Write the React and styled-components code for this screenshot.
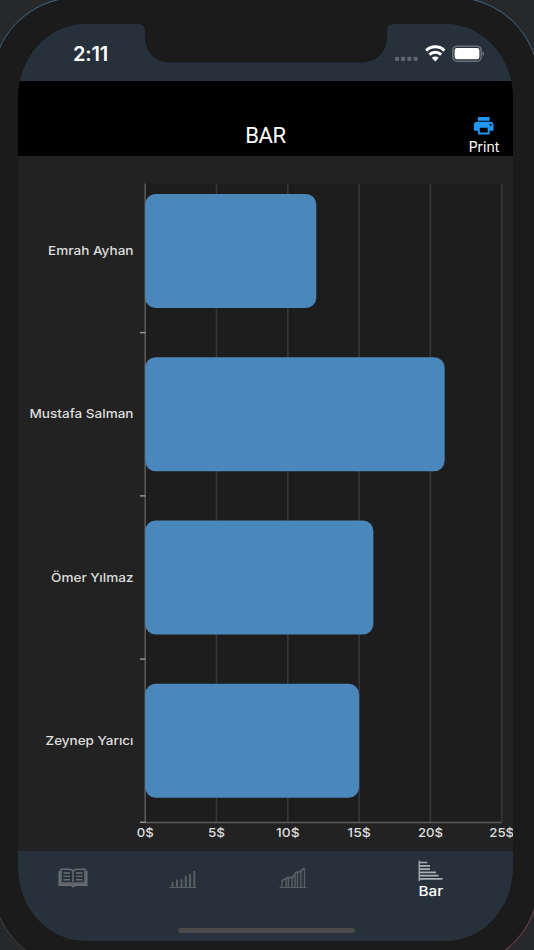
import styled, { createGlobalStyle } from "styled-components";
import { MdPrint } from "react-icons/md";

const people = [
    { name: "Emrah Ayhan", amount: 12, labelWidth: 85.5 },
    { name: "Mustafa Salman", amount: 21, labelWidth: 104 },
    { name: "Ömer Yılmaz", amount: 16, labelWidth: 82.5 },
    { name: "Zeynep Yarıcı", amount: 15, labelWidth: 88 }
]

const ticks = [
    { value: 0, width: 17 },
    { value: 5, width: 17 },
    { value: 10, width: 23.5 },
    { value: 15, width: 23.5 },
    { value: 20, width: 25 },
    { value: 25, width: 25 }
]

export default function App(){
    return (
        <Desktop>
            <GlobalStyle />
            <PhoneEdge>
                <Phone>
                    <Screen>
                        <StatusBar>
                            <Time>2:11</Time>
                            <StatusIcons />
                        </StatusBar>
                        <Notch />
                        <Header>
                            <Title>BAR</Title>
                            <PrintButton>
                                <MdPrint size={23.5} color="#2196f3" />
                                <span>Print</span>
                            </PrintButton>
                        </Header>
                        <ChartArea>
                            <BarChart />
                        </ChartArea>
                        <TabBar>
                            <Tab $height="36.5px"><BookIcon /></Tab>
                            <Tab $height="38px"><ColumnIcon /></Tab>
                            <Tab $height="38px"><MixedIcon /></Tab>
                            <Tab $height="49px">
                                <BarIcon />
                                <TabLabel>Bar</TabLabel>
                            </Tab>
                            <HomeIndicator />
                        </TabBar>
                    </Screen>
                </Phone>
            </PhoneEdge>
        </Desktop>
    )
}

function BarChart(){
    const left = 127.2;
    const top = 27.5;
    const bottom = 666.5;
    const step = 71.3;
    const rowHeight = 163.25;
    return (
        <Chart viewBox="0 0 495 695">
            <rect x={left} y={top} width={step * 5} height={bottom - top} fill="#1d1d1d" />
            {ticks.slice(1).map(tick => (
                <path key={tick.value} d={`M${left + tick.value / 5 * step} ${top}V${bottom}`} stroke="#36363a" strokeWidth="1.7" />
            ))}
            <path d={`M${left} ${top}V${bottom}`} stroke="#5c5c5c" strokeWidth="1.5" />
            <path d={`M${left} ${bottom}h${step * 5}`} stroke="#5c5c5c" strokeWidth="1.3" />
            {people.map((person, index) => (
                <g key={person.name}>
                    <rect
                        x={left}
                        y={38 + index * rowHeight}
                        width={person.amount / 5 * step}
                        height={114}
                        rx="10.5"
                        fill="#4a87ba"
                    />
                    <path d={`M122 ${176.6 + index * rowHeight}h5.5`} stroke="#9a9a9a" strokeWidth="1.4" />
                    <text
                        x={115.5 - person.labelWidth}
                        y={99.1 + index * rowHeight}
                        textLength={person.labelWidth}
                        lengthAdjust="spacingAndGlyphs"
                    >{person.name}</text>
                </g>
            ))}
            {ticks.map(tick => (
                <text
                    key={tick.value}
                    x={left + tick.value / 5 * step - tick.width / 2}
                    y={680.7}
                    textLength={tick.width}
                    lengthAdjust="spacingAndGlyphs"
                >{`${tick.value}$`}</text>
            ))}
        </Chart>
    )
}

function Notch(){
    return (
        <NotchShape width="258" height="39" viewBox="0 0 258 39">
            <path d="M0 0C6 0 8 2 8 8V13C8 29 19 38.5 34 38.5H224C239 38.5 250 29 250 13V8C250 2 252 0 258 0Z" fill="#1b1b1b" />
        </NotchShape>
    )
}

function StatusIcons(){
    return (
        <svg width="90" height="18" viewBox="0 0 90 18">
            {[3, 9, 15.3, 21.5].map(x => (
                <rect key={x} x={x - 2} y="12.8" width="4.2" height="4.2" rx="1.2" fill="#5c6570" />
            ))}
            <g fill="none" stroke="#fff" strokeWidth="3">
                <path d="M32.2 6.6C37.3 1.6 45.3 1.6 50.4 6.6" />
                <path d="M35.4 10.7C38.8 7.5 43.8 7.5 47.2 10.7" />
            </g>
            <path d="M41.3 17.4L37.8 13.8C39.9 12 42.7 12 44.8 13.8Z" fill="#fff" />
            <rect x="58.8" y="2.2" width="28.4" height="15" rx="4.2" fill="none" stroke="#69727b" strokeWidth="1.6" />
            <rect x="60.6" y="4.1" width="24.8" height="11.2" rx="2.4" fill="#fff" />
            <path d="M88.6 7.4Q90 8 90 9.7T88.6 12Z" fill="#7d858d" />
        </svg>
    )
}

function BookIcon(){
    return (
        <svg width="30" height="20" viewBox="0 0 30 20" fill="none" stroke="#696d71">
            <path d="M15 3Q13.5 1.2 11 1.2H3V15H11Q13.7 15 15 16.2Q16.3 15 19 15H27V1.2H19Q16.5 1.2 15 3V14.5" strokeWidth="1.5" />
            <path d="M1.5 3V17H12Q13.5 17.1 15 18.4Q16.5 17.1 18 17H28.5V3" strokeWidth="2" />
            <path d="M5.5 5H12M5.5 8.4H12M5.5 11.8H12M18 5H24.5M18 8.4H24.5M18 11.8H24.5" strokeWidth="1.4" />
        </svg>
    )
}

function ColumnIcon(){
    return (
        <svg width="28" height="20" viewBox="0 0 28 20" stroke="#5a5f64" fill="none">
            <path d="M.5 18.5H27.5" strokeWidth="1.2" />
            <path d="M3.6 18V13M8 18V10.6M12.6 18V10.6M16.8 18V6.7M21 18V5M25.3 18V2" strokeWidth="1.9" />
        </svg>
    )
}

function MixedIcon(){
    return (
        <svg width="28" height="22" viewBox="0 0 28 22" stroke="#5a5f64" fill="none">
            <path d="M.5 20.5H27.5" strokeWidth="1.2" />
            <path d="M3 20.3V13.5M7 20.3V11M9.3 20.3V11M13 20.3V11M16 20.3V8M18.5 20.3V5.5M21.8 20.3V4.8M25.5 20.3V1" strokeWidth="1.4" />
            <path d="M2.5 14L8.7 10.3L13 10.8L17 5.6L21 4.6L25.7 1" strokeWidth="1.7" />
        </svg>
    )
}

function BarIcon(){
    return (
        <svg width="25" height="22" viewBox="0 0 25 22" stroke="#a8afb5" fill="none">
            <path d="M1.2 .5V21" strokeWidth="1.3" />
            <path d="M1 2.5H9.2M1 5.9H12M1 9.2H12M1 12.3H18M1 15.6H20.5M1 18.9H24.5" strokeWidth="1.7" />
        </svg>
    )
}

const GlobalStyle = createGlobalStyle`
    body{
        margin: 0;
        background: #26282a;
        font-family: Inter, "Liberation Sans", sans-serif;
        color: #ffffff;
    }
    *{
        box-sizing: border-box;
    }
`
const Desktop = styled.div`
    width: 534px;
    height: 950px;
    overflow: hidden;
    background: #26282a;
`
const PhoneEdge = styled.div`
    width: 547px;
    height: 971px;
    margin: -3px 0 0 -8px;
    padding: 1px;
    border-radius: 85px;
    background: linear-gradient(#3b5e75 50%, transparent 50%), linear-gradient(to right, #3b3c3e 50%, #713f52 50%);
`
const Phone = styled.div`
    height: 969px;
    padding: 26px 25px;
    border-radius: 84px;
    background: #1b1b1b;
`
const Screen = styled.div`
    position: relative;
    width: 495px;
    height: 916.5px;
    display: flex;
    flex-direction: column;
    overflow: hidden;
    border-radius: 67px / 74px;
    background: #222222;
`
const NotchShape = styled.svg`
    position: absolute;
    top: 0;
    left: 119px;
`
const StatusBar = styled.div`
    height: 57px;
    flex-shrink: 0;
    display: flex;
    justify-content: space-between;
    align-items: flex-start;
    padding: 20px 29px 0 55px;
    background: #26313b;
`
const Time = styled.div`
    font-size: 20px;
    font-weight: 600;
    line-height: 20px;
    letter-spacing: -0.2px;
`
const Header = styled.header`
    height: 74.5px;
    flex-shrink: 0;
    display: grid;
    grid-template-columns: 1fr auto 1fr;
    background: #000000;
`
const Title = styled.h1`
    grid-column: 2;
    margin: 42px 0 0;
    font-family: Roboto, sans-serif;
    font-size: 22px;
    font-weight: 400;
    line-height: 26px;
    letter-spacing: -0.3px;
`
const PrintButton = styled.button`
    justify-self: end;
    width: 58px;
    padding: 33px 0 0;
    border: none;
    background: none;
    color: #ffffff;
    font-family: inherit;
    font-size: 14px;
    line-height: 17px;
    display: flex;
    flex-direction: column;
    align-items: center;
`
const ChartArea = styled.main`
    height: 695.5px;
    flex-shrink: 0;
`
const Chart = styled.svg`
    display: block;
    width: 495px;
    height: 695px;

    text{
        font-size: 12.3px;
        font-weight: 500;
        fill: #dedede;
    }
`
const TabBar = styled.nav`
    position: relative;
    flex: 1;
    display: grid;
    grid-template-columns: 110px 110px 110px 165px;
    background: #26313b;
`
const Tab = styled.div`
    height: ${props => props.$height};
    display: flex;
    flex-direction: column;
    justify-content: flex-end;
    align-items: center;
`
const TabLabel = styled.span`
    margin-top: 1px;
    font-size: 13.5px;
    font-weight: 500;
    line-height: 17px;
    transform: scaleX(1.13);
`
const HomeIndicator = styled.div`
    position: absolute;
    left: 159.5px;
    bottom: 8px;
    width: 177px;
    height: 5px;
    border-radius: 3px;
    background: #4a4a4a;
`
